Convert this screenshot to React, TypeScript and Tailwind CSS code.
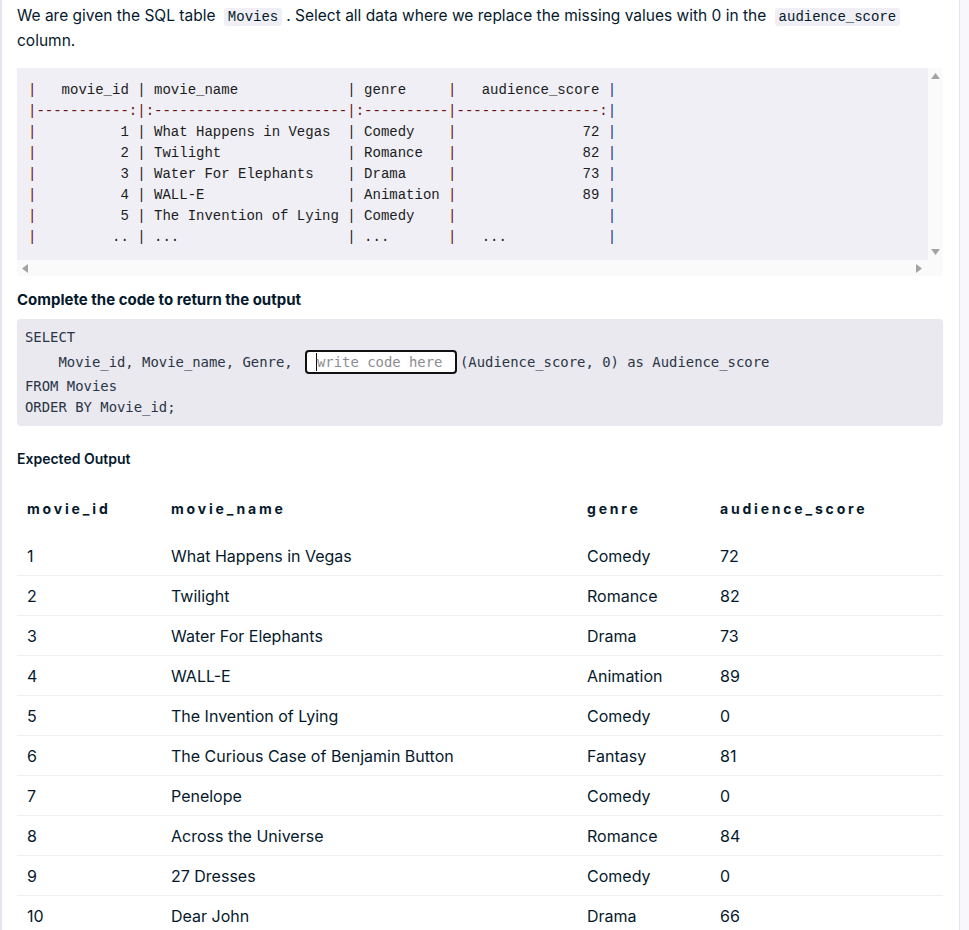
import React from 'react'

const sans = "font-['Inter','Noto_Sans',sans-serif]"

// raw markdown-ish table shown in the data block
const tableLines: { cells: string[]; sep?: boolean }[] = [
  { cells: ['   movie_id ', ' movie_name             ', ' genre     ', '   audience_score '] },
  { cells: ['-----------:', ':-----------------------', ':----------', '-----------------:'], sep: true },
  { cells: ['          1 ', ' What Happens in Vegas  ', ' Comedy    ', '               72 '] },
  { cells: ['          2 ', ' Twilight               ', ' Romance   ', '               82 '] },
  { cells: ['          3 ', ' Water For Elephants    ', ' Drama     ', '               73 '] },
  { cells: ['          4 ', ' WALL-E                 ', ' Animation ', '               89 '] },
  { cells: ['          5 ', ' The Invention of Lying ', ' Comedy    ', '                  '] },
  { cells: ['         .. ', ' ...                    ', ' ...       ', '   ...            '] },
]

const rows = [
  ['1', 'What Happens in Vegas', 'Comedy', '72'],
  ['2', 'Twilight', 'Romance', '82'],
  ['3', 'Water For Elephants', 'Drama', '73'],
  ['4', 'WALL-E', 'Animation', '89'],
  ['5', 'The Invention of Lying', 'Comedy', '0'],
  ['6', 'The Curious Case of Benjamin Button', 'Fantasy', '81'],
  ['7', 'Penelope', 'Comedy', '0'],
  ['8', 'Across the Universe', 'Romance', '84'],
  ['9', '27 Dresses', 'Comedy', '0'],
  ['10', 'Dear John', 'Drama', '66'],
]

function InlineCode({ children }: { children: React.ReactNode }) {
  return (
    <code className="mx-[4px] rounded-[3px] bg-[#efeff5] px-[4px] py-[1px] font-['Liberation_Mono',monospace] text-[14px] text-[#05192d]">
      {children}
    </code>
  )
}

function Pipe({ color }: { color: string }) {
  return <span className={color}>|</span>
}

function DataBlock() {
  const red = 'text-[#6e1010]'
  return (
    <div className="mt-[15px] flex flex-col">
      <div className="flex">
        <div className="h-[192px] flex-1 bg-[#efeff5] py-[12px] pl-[11px]">
          <pre className="font-['Liberation_Mono',monospace] text-[14px] leading-[21px] text-[#1c1c1c]">
            {tableLines.map((line, i) => (
              <div key={i}>
                <Pipe color={red} />
                <span className={line.sep ? red : ''}>{line.cells[0]}</span>
                <Pipe color={line.sep ? red : 'text-[#1c1c1c]'} />
                <span className={line.sep ? red : ''}>{line.cells[1]}</span>
                <Pipe color={line.sep ? red : 'text-[#1c1c1c]'} />
                <span className={line.sep ? red : ''}>{line.cells[2]}</span>
                <Pipe color={red} />
                <span className={line.sep ? red : ''}>{line.cells[3]}</span>
                <Pipe color="text-[#14368f]" />
              </div>
            ))}
          </pre>
        </div>
        {/* vertical scrollbar */}
        <div className="flex w-[15px] flex-col items-center justify-between bg-[#fafafa] py-[5px]">
          <svg width="9" height="6" viewBox="0 0 9 6"><path d="M4.5 0 L9 6 L0 6 Z" fill="#a3a3a3" /></svg>
          <svg width="9" height="6" viewBox="0 0 9 6"><path d="M0 0 L9 0 L4.5 6 Z" fill="#a3a3a3" /></svg>
        </div>
      </div>
      {/* horizontal scrollbar */}
      <div className="flex h-[16px] items-center justify-between bg-[#fafafa] pl-[5px] pr-[21px]">
        <svg width="6" height="9" viewBox="0 0 6 9"><path d="M6 0 L6 9 L0 4.5 Z" fill="#a3a3a3" /></svg>
        <svg width="6" height="9" viewBox="0 0 6 9"><path d="M0 0 L6 4.5 L0 9 Z" fill="#a3a3a3" /></svg>
      </div>
    </div>
  )
}

function CodeBlock() {
  return (
    <div className="mt-[9px] rounded-[4px] bg-[#e9e9ef] px-[8px] py-[8px] font-['DejaVu_Sans_Mono',monospace] text-[13.9px] text-[#2b3546]">
      <div className="h-[21px] leading-[21px] whitespace-pre">SELECT</div>
      <div className="flex h-[28px] items-center whitespace-pre">
        <span>{'    Movie_id, Movie_name, Genre, '}</span>
        <div className="ml-[4px] mr-[3px] flex h-[24px] w-[152px] items-center rounded-[4px] border-2 border-[#111] bg-white pl-[9px]">
          <span className="h-[18px] w-px bg-[#111]" />
          <span className="text-[#8d8d93]">write code here</span>
        </div>
        <span>(Audience_score, 0) as Audience_score</span>
      </div>
      <div className="h-[21px] leading-[21px] whitespace-pre">FROM Movies</div>
      <div className="h-[21px] leading-[21px] whitespace-pre">ORDER BY Movie_id;</div>
    </div>
  )
}

function OutputTable() {
  const cols = 'grid grid-cols-[144px_416px_133px_1fr]'
  return (
    <div className="mt-[11px]">
      <div className={`${cols} h-[56px] items-center px-[10px] text-[14px] font-bold tracking-[2.8px] text-[#05192d]`}>
        <div>movie_id</div>
        <div>movie_name</div>
        <div>genre</div>
        <div>audience_score</div>
      </div>
      {rows.map((r, i) => (
        <div
          key={i}
          className={`${cols} h-[40px] items-center border-b border-[#f0f0f4] px-[10px] text-[16px] text-[#05192d]`}
        >
          {r.map((c, j) => (
            <div key={j}>{c}</div>
          ))}
        </div>
      ))}
    </div>
  )
}

export default function App() {
  return (
    <div className={`flex min-h-[930px] w-full bg-white ${sans}`}>
      <div className="w-[2px] shrink-0 bg-[#e4e4ee]" />
      <div className="min-w-0 flex-1 pb-[20px] pl-[15px] pr-[16px] pt-[4px]">
        <p className="text-[15.5px] leading-[24px] text-[#05192d]">
          We are given the SQL table <InlineCode>Movies</InlineCode>. Select all data where we replace the missing
          values with 0 in the <InlineCode>audience_score</InlineCode>
          <br />
          column.
        </p>

        <DataBlock />

        <h3 className="mt-[14px] text-[15px] font-bold leading-[20px] text-[#05192d]">
          Complete the code to return the output
        </h3>

        <CodeBlock />

        <h4 className="mt-[23px] text-[14px] font-semibold leading-[20px] text-[#05192d]">Expected Output</h4>

        <OutputTable />
      </div>
      <div className="w-[10px] shrink-0 border-l border-[#e4e4ee] bg-[#f7f7fc]" />
    </div>
  )
}
